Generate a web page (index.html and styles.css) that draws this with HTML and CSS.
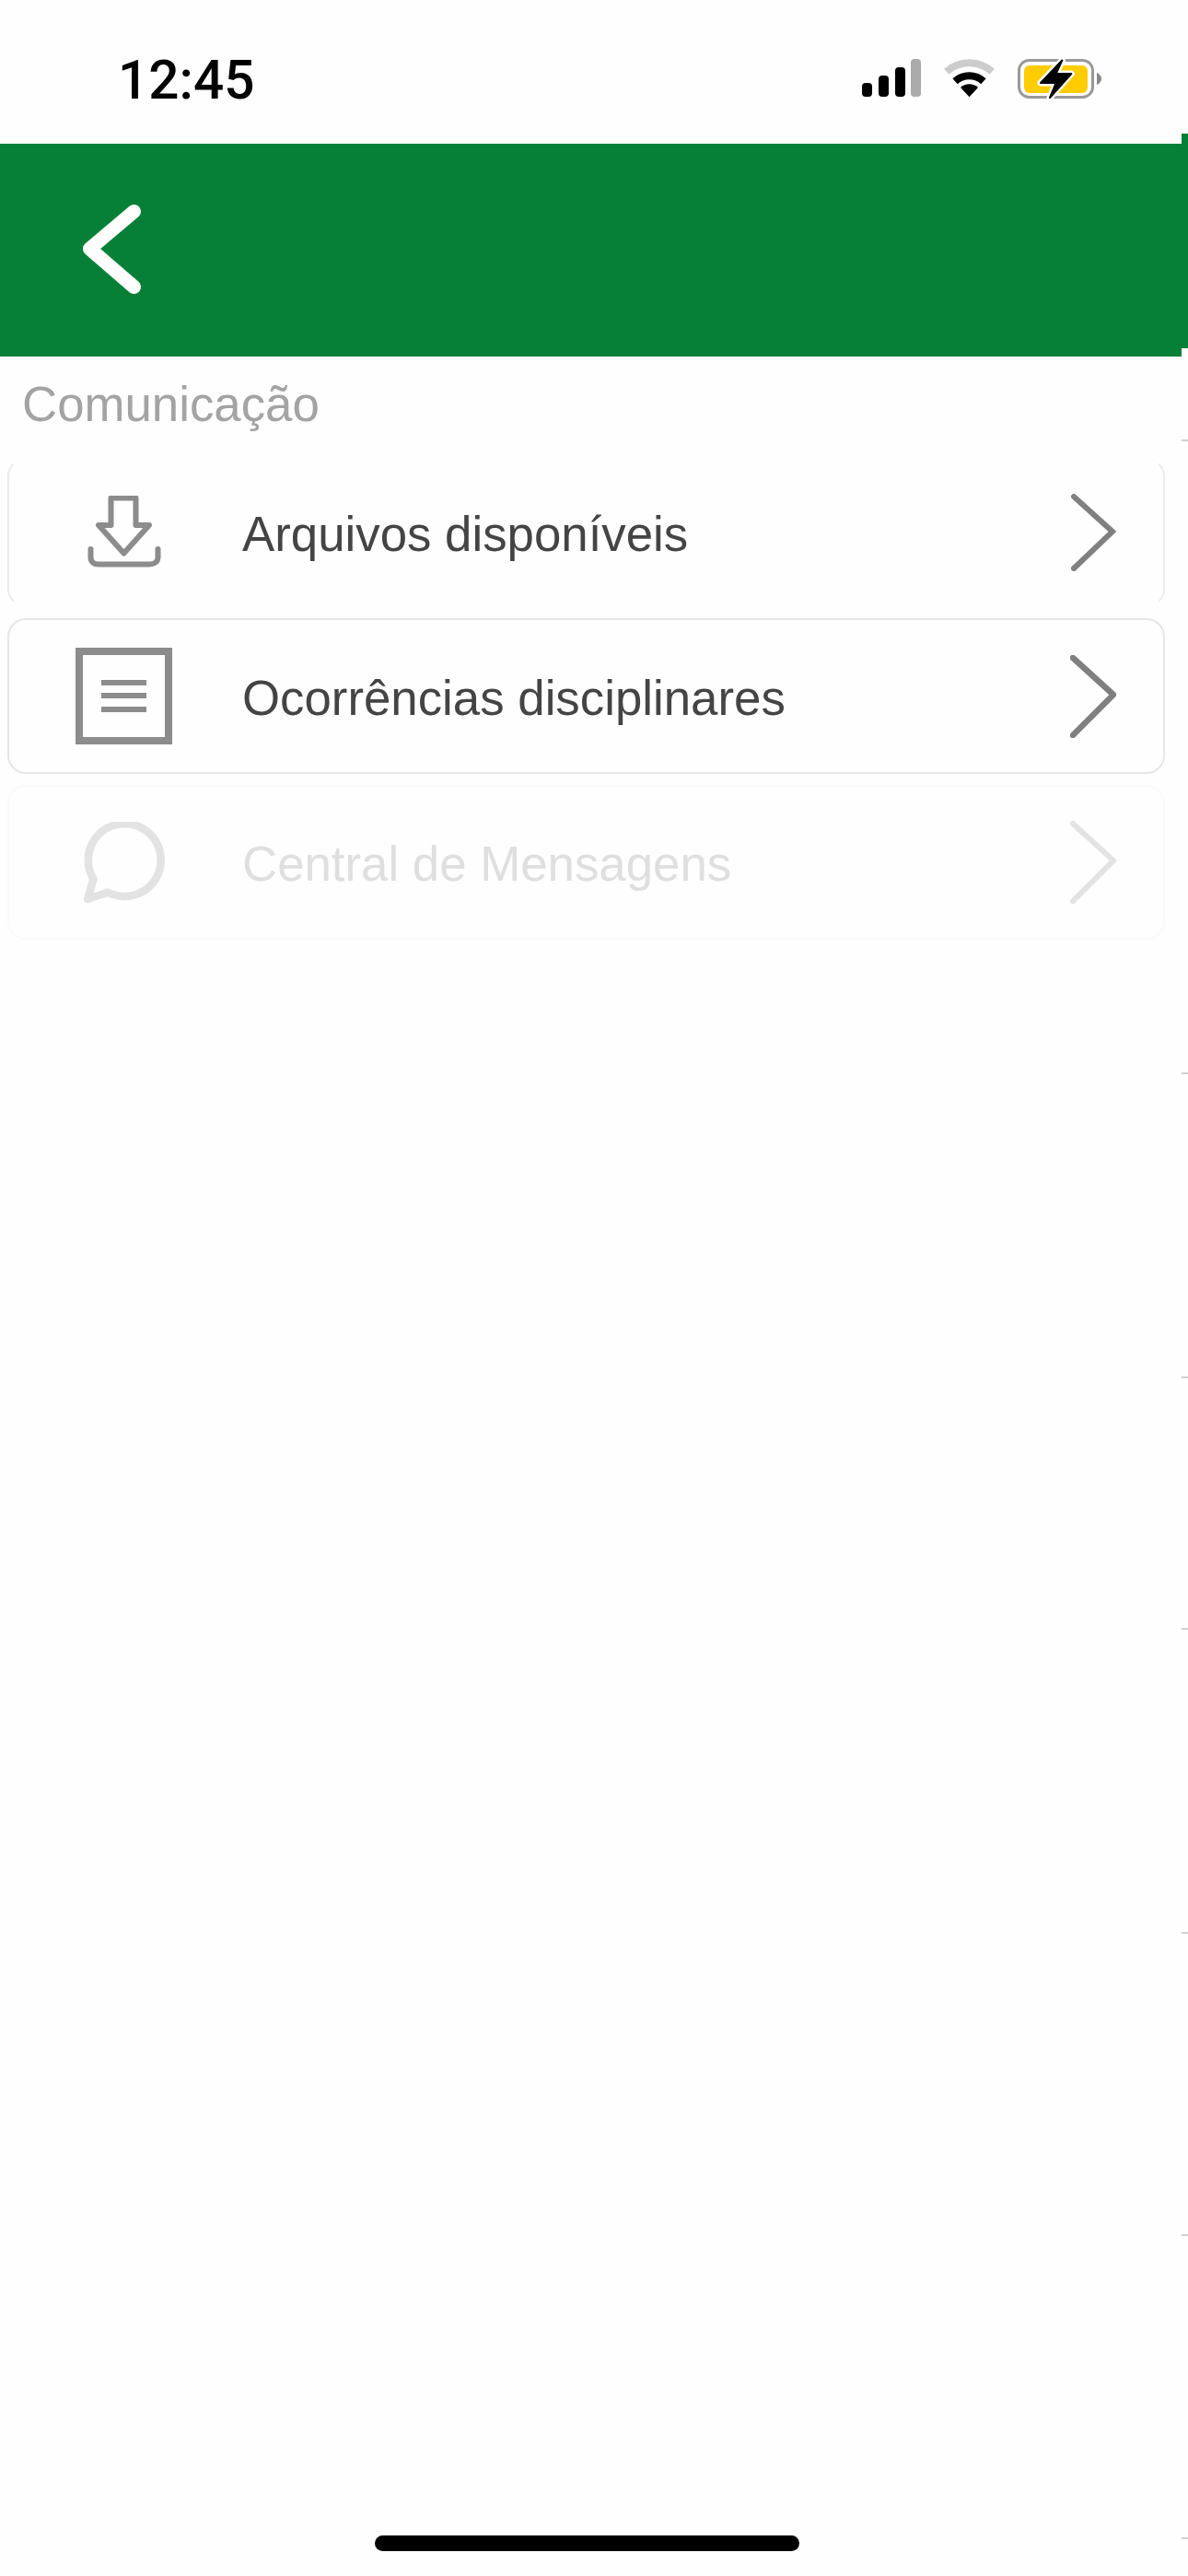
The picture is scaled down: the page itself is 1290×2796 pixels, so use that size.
FILE: index.html
```html
<!DOCTYPE html>
<html lang="pt-BR">
<head>
  <meta charset="UTF-8" />
  <meta name="viewport" content="width=device-width, initial-scale=1" />
  <title>Comunicação</title>
  <link rel="stylesheet" href="styles.css">
</head>
<body>

  <div class="status-bar">
    <span class="time">12:45</span>
    <div class="status-icons">
      <svg class="signal" width="64" height="43" viewBox="0 0 64 43">
        <rect x="0" y="26" width="11" height="15" rx="4" fill="#000"/>
        <rect x="18" y="18" width="11" height="23" rx="4" fill="#000"/>
        <rect x="36" y="9" width="11" height="32" rx="4" fill="#000"/>
        <rect x="53" y="0" width="11" height="41" rx="4" fill="#aaa"/>
      </svg>
      <svg class="wifi" width="55" height="43" viewBox="0 0 55 43">
        <path d="M2.7 13.8A37 37 0 0 1 52.3 13.8" fill="none" stroke="#ccc" stroke-width="8"/>
        <path d="M12.1 24.2A23 23 0 0 1 42.9 24.2" fill="none" stroke="#000" stroke-width="8"/>
        <path d="M27.5 41.3L18 31A14 14 0 0 1 37 31Z" fill="#000"/>
      </svg>
      <svg class="battery" width="91" height="43" viewBox="0 0 91 43">
        <rect x="1.500" y="1.500" width="80" height="40" rx="11" fill="none" stroke="#999" stroke-width="3"/>
        <rect x="7" y="7" width="69" height="30" rx="6" fill="#ffcc00"/>
        <path d="M86 15C89 16 91 19 91 21.500C91 24 89 27 86 28Z" fill="#888"/>
        <path d="M48.300 1.500L25 26H41.700L35 42L58.300 16H41.700Z" fill="#000" stroke="#fff" stroke-width="7" stroke-linejoin="round"/>
        <path d="M48.300 1.500L25 26H41.700L35 42L58.300 16H41.700Z" fill="#000" stroke="#000" stroke-width="2" stroke-linejoin="round"/>
      </svg>
    </div>
  </div>

  <header class="top-bar">
    <svg class="back" width="70" height="100" viewBox="0 0 70 100">
      <path d="M55.500 7.500L7.500 48L55.500 89.500" fill="none" stroke="#fff" stroke-width="15" stroke-linecap="round" stroke-linejoin="round"/>
    </svg>
  </header>

  <main class="content">
    <h2 class="section-title">Comunicação</h2>

    <div class="menu-list">
      <a class="menu-row row-first">
        <span class="row-icon">
          <svg width="80" height="80" viewBox="0 0 80 80">
            <path d="M25.500 2.500H52.500V32H67L39.500 62.500L12 32H25.500Z" fill="none" stroke="#8c8c8c" stroke-width="6" stroke-linejoin="round"/>
            <path d="M3.500 58V67C3.500 72 7 74.500 12 74.500H67C72 74.500 76.500 72 76.500 67V58" fill="none" stroke="#8c8c8c" stroke-width="6" stroke-linecap="round"/>
          </svg>
        </span>
        <span class="row-label">Arquivos disponíveis</span>
        <svg class="row-arrow" width="50" height="84" viewBox="0 0 50 84">
          <path d="M4 3L46 41L4 81" fill="none" stroke="#808080" stroke-width="6" stroke-linecap="round"/>
        </svg>
      </a>

      <a class="menu-row row-second">
        <span class="row-icon">
          <svg width="105" height="105" viewBox="0 0 105 105">
            <rect x="4" y="4" width="97" height="97" fill="none" stroke="#8c8c8c" stroke-width="8"/>
            <path d="M28 38H77M28 52H77M28 67H77" fill="none" stroke="#8c8c8c" stroke-width="6"/>
          </svg>
        </span>
        <span class="row-label">Ocorrências disciplinares</span>
        <svg class="row-arrow" width="50" height="90" viewBox="0 0 50 90">
          <path d="M3 3L47 43L3 87" fill="none" stroke="#808080" stroke-width="6.500" stroke-linecap="round"/>
        </svg>
      </a>

      <a class="menu-row row-faded">
        <span class="row-icon">
          <svg width="88" height="88" viewBox="0 0 88 88">
            <path d="M26 76.500A39.500 39.500 0 1 0 10.500 62L4 84Z" fill="none" stroke="#e3e3e3" stroke-width="8.500" stroke-linejoin="round"/>
          </svg>
        </span>
        <span class="row-label">Central de Mensagens</span>
        <svg class="row-arrow" width="50" height="90" viewBox="0 0 50 90">
          <path d="M3 3L47 43L3 87" fill="none" stroke="#e3e3e3" stroke-width="6" stroke-linecap="round"/>
        </svg>
      </a>
    </div>
  </main>

  <div class="home-bar"></div>

  <div class="tick tick-a"></div>
  <div class="tick tick-b"></div>
  <div class="tick tick-c"></div>
  <div class="tick tick-d"></div>
  <div class="tick tick-e"></div>
  <div class="tick tick-f"></div>
  <div class="tick tick-g"></div>

</body>
</html>
```

FILE: styles.css
```css
html, body {
  margin: 0;
  padding: 0;
}
body {
  position: relative;
  display: flex;
  flex-direction: column;
  height: 2796px;
  overflow: hidden;
  background-color: #fefefe;
  font-family: "Liberation Sans", Arial, sans-serif;
}
.status-bar {
  display: flex;
  align-items: center;
  justify-content: space-between;
  box-sizing: border-box;
  height: 156px;
  padding: 15px 94px 0 128px;
  background-color: #fefefe;
}
.time {
  padding-top: 3px;
  font-family: Roboto, sans-serif;
  font-size: 58.5px;
  font-weight: 500;
  line-height: 60px;
  color: #000;
}
.status-icons {
  display: flex;
  gap: 25px;
}
.status-icons svg {
  display: block;
}
.top-bar {
  position: relative;
  display: flex;
  align-items: center;
  box-sizing: border-box;
  height: 231px;
  margin-right: 7px;
  padding-left: 90px;
  background-color: #068037;
}
.top-bar::after {
  content: "";
  position: absolute;
  top: -11px;
  bottom: 9px;
  left: 100%;
  width: 7px;
  background-color: #068037;
}
.back {
  display: block;
}
.content {
  flex: 1;
}
.section-title {
  margin: 0;
  padding: 22px 0 28px 24px;
  font-size: 52.8px;
  font-weight: normal;
  line-height: 60px;
  color: #a3a3a3;
}
.menu-list {
  display: flex;
  flex-direction: column;
  gap: 12px;
  margin: 0 25px 0 8px;
}
.menu-row {
  display: flex;
  align-items: center;
  box-sizing: border-box;
  padding-right: 51px;
  border: 2px solid #e6e6e6;
  border-radius: 20px;
  background-color: #fefefe;
}
.row-first {
  height: 162px;
  border-color: #fdfdfd #ececec;
}
.row-second {
  height: 169px;
}
.row-faded {
  height: 168px;
  border-color: #fafafa;
}
.row-icon {
  display: flex;
  align-items: center;
  justify-content: center;
  flex: none;
  width: 249px;
}
.row-icon svg {
  display: block;
}
.row-label {
  flex: 1;
  padding: 4px 0 0 4px;
  font-size: 52.8px;
  line-height: 60px;
  color: #444;
}
.row-faded .row-label {
  color: #dfdfdf;
}
.row-arrow {
  display: block;
  flex: none;
}
.home-bar {
  flex: none;
  align-self: center;
  width: 461px;
  height: 17px;
  margin: 0 15px 27px 0;
  border-radius: 9px;
  background-color: #000;
}
.tick {
  position: absolute;
  right: 0;
  width: 7px;
  height: 2px;
  background-color: #d0d0d0;
}
.tick-a { top: 477px; }
.tick-b { top: 1164px; }
.tick-c { top: 1494px; }
.tick-d { top: 1767px; }
.tick-e { top: 2097px; }
.tick-f { top: 2425px; }
.tick-g { top: 2754px; }
```
